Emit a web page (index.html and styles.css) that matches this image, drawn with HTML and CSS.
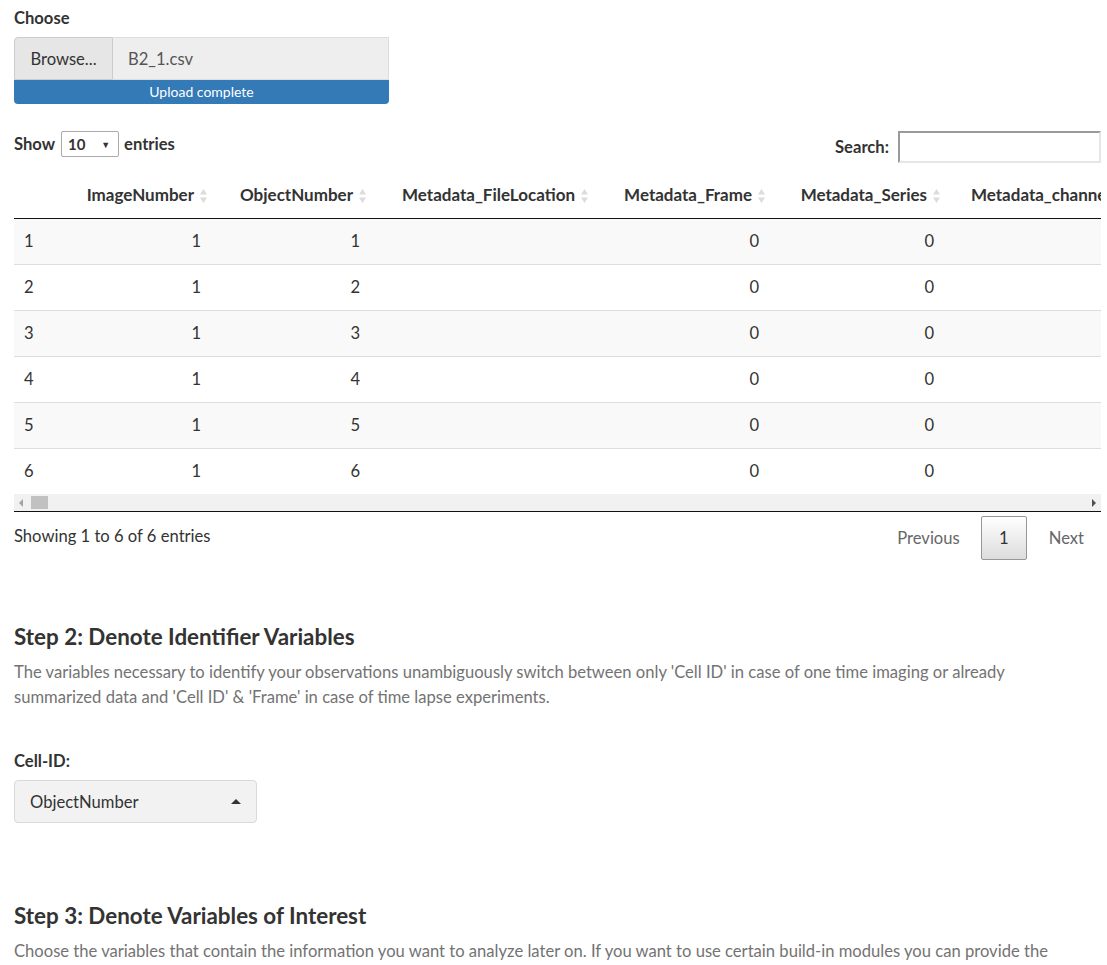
FILE: index.html
```html
<!DOCTYPE html>
<html>
<head>
<meta charset="utf-8">
<link rel="stylesheet" href="styles.css">
</head>
<body>
<div class="page">
  <div class="field">
    <div class="lbl">Choose</div>
    <div class="file-row">
      <span class="browse">Browse...</span>
      <span class="fname">B2_1.csv</span>
    </div>
    <div class="progress">Upload complete</div>
  </div>

  <div class="dt">
    <div class="dt-top">
      <div class="length">Show <span class="sel">10 <span class="arr">▼</span></span> entries</div>
      <div class="search">Search: <span class="inp"></span></div>
    </div>
    <div class="scroll">
      <table class="grid">
        <colgroup>
          <col class="c0"><col class="c1"><col class="c2"><col class="c3"><col class="c4"><col class="c5"><col class="c6">
        </colgroup>
        <thead>
          <tr>
            <th></th>
            <th>ImageNumber<svg class="sort" viewBox="0 0 7 20"><path d="M3.5 3 L7 8.5 L0 8.5Z M0 11.5 L7 11.5 L3.5 17Z"/></svg></th>
            <th>ObjectNumber<svg class="sort" viewBox="0 0 7 20"><path d="M3.5 3 L7 8.5 L0 8.5Z M0 11.5 L7 11.5 L3.5 17Z"/></svg></th>
            <th>Metadata_FileLocation<svg class="sort" viewBox="0 0 7 20"><path d="M3.5 3 L7 8.5 L0 8.5Z M0 11.5 L7 11.5 L3.5 17Z"/></svg></th>
            <th>Metadata_Frame<svg class="sort" viewBox="0 0 7 20"><path d="M3.5 3 L7 8.5 L0 8.5Z M0 11.5 L7 11.5 L3.5 17Z"/></svg></th>
            <th>Metadata_Series<svg class="sort" viewBox="0 0 7 20"><path d="M3.5 3 L7 8.5 L0 8.5Z M0 11.5 L7 11.5 L3.5 17Z"/></svg></th>
            <th class="left">Metadata_channel<svg class="sort" viewBox="0 0 7 20"><path d="M3.5 3 L7 8.5 L0 8.5Z M0 11.5 L7 11.5 L3.5 17Z"/></svg></th>
          </tr>
        </thead>
        <tbody>
          <tr><td class="idx">1</td><td>1</td><td>1</td><td></td><td>0</td><td>0</td><td></td></tr>
          <tr><td class="idx">2</td><td>1</td><td>2</td><td></td><td>0</td><td>0</td><td></td></tr>
          <tr><td class="idx">3</td><td>1</td><td>3</td><td></td><td>0</td><td>0</td><td></td></tr>
          <tr><td class="idx">4</td><td>1</td><td>4</td><td></td><td>0</td><td>0</td><td></td></tr>
          <tr><td class="idx">5</td><td>1</td><td>5</td><td></td><td>0</td><td>0</td><td></td></tr>
          <tr><td class="idx">6</td><td>1</td><td>6</td><td></td><td>0</td><td>0</td><td></td></tr>
        </tbody>
      </table>
    </div>
    <div class="hbar">
      <span class="tri-l"></span>
      <span class="thumb"></span>
      <span class="spacer"></span>
      <span class="tri-r"></span>
    </div>
    <div class="dt-bottom">
      <div class="info">Showing 1 to 6 of 6 entries</div>
      <div class="paginate">
        <span class="pbtn disabled">Previous</span>
        <span class="pbtn current">1</span>
        <span class="pbtn disabled">Next</span>
      </div>
    </div>
  </div>

  <h3 class="step">Step 2: Denote Identifier Variables</h3>
  <p class="desc">The variables necessary to identify your observations unambiguously switch between only 'Cell ID' in case of one time imaging or already<br>summarized data and 'Cell ID' &amp; 'Frame' in case of time lapse experiments.</p>

  <div class="field2">
    <div class="lbl">Cell-ID:</div>
    <div class="selectize"><span>ObjectNumber</span><span class="caret"></span></div>
  </div>

  <h3 class="step step3">Step 3: Denote Variables of Interest</h3>
  <p class="desc">Choose the variables that contain the information you want to analyze later on. If you want to use certain build-in modules you can provide the</p>
</div>
</body>
</html>
```
FILE: styles.css
```css
html, body {
  margin: 0;
  padding: 0;
  background: #fff;
}
body {
  font-family: Lato, "Open Sans", sans-serif;
  font-size: 16.6px;
  color: #333;
  overflow: hidden;
}
.page {
  padding: 0 6px 0 14px;
}
.lbl {
  font-weight: bold;
  line-height: 20px;
}
.field {
  padding-top: 8px;
}
.field .lbl {
  margin-bottom: 9px;
}
.file-row {
  display: flex;
  width: 375px;
  height: 43px;
}
.browse {
  width: 97px;
  border: 1px solid #ccc;
  border-radius: 4px 0 0 0;
  background: #e6e6e6;
  display: flex;
  align-items: center;
  justify-content: center;
  color: #333;
}
.fname {
  flex: 1;
  background: #eee;
  border: 1px solid #ddd;
  border-left: none;
  display: flex;
  align-items: center;
  padding-left: 15px;
  color: #555;
}
.progress {
  width: 375px;
  height: 24px;
  background: #337ab7;
  color: #fff;
  font-size: 14px;
  line-height: 24px;
  text-align: center;
  border-radius: 0 0 4px 4px;
}
.dt {
  margin-top: 27px;
}
.dt-top {
  display: flex;
  justify-content: space-between;
  align-items: flex-start;
  height: 32px;
  margin-bottom: 12px;
  font-weight: bold;
}
.length {
  display: flex;
  align-items: center;
  height: 26px;
  gap: 4px;
}
.sel {
  display: inline-flex;
  align-items: center;
  justify-content: space-between;
  box-sizing: border-box;
  width: 58px;
  height: 26px;
  border: 1px solid #aaa;
  border-radius: 2px;
  padding: 0 8px 0 6px;
  margin: 0 1px 0 2px;
  font-size: 15px;
}
.arr {
  font-size: 9px;
}
.search {
  display: flex;
  align-items: center;
  height: 32px;
  gap: 9px;
}
.inp {
  display: inline-block;
  box-sizing: border-box;
  width: 203px;
  height: 32px;
  border: 2px solid;
  border-color: #9a9a9a #e6e6e6 #e6e6e6 #9a9a9a;
}
.scroll {
  overflow: hidden;
  width: 100%;
}
.grid {
  border-collapse: collapse;
  table-layout: fixed;
  width: 1250px;
}
.c0 { width: 42px; }
.c1 { width: 155px; }
.c2 { width: 159px; }
.c3 { width: 222px; }
.c4 { width: 177px; }
.c5 { width: 175px; }
.c6 { width: 320px; }
.grid th {
  font-weight: bold;
  font-size: 17px;
  text-align: right;
  padding: 8px 4px 12px 10px;
  line-height: 23px;
  border-bottom: 1px solid #111;
  white-space: nowrap;
}
.grid th.left {
  text-align: left;
  padding-left: 27px;
}
.sort {
  width: 7px;
  height: 20px;
  margin-left: 6px;
  vertical-align: -5px;
  fill: #dcdcdc;
}
.grid td {
  padding: 11px 10px;
  line-height: 23px;
  text-align: right;
  border-top: 1px solid #ddd;
}
.grid tbody tr:first-child td {
  border-top: none;
}
.grid tbody tr:nth-child(odd) {
  background: #f9f9f9;
}
.grid td.idx {
  text-align: left;
}
.hbar {
  display: flex;
  align-items: center;
  height: 17px;
  background: #f1f1f1;
  border-bottom: 1px solid #111;
}
.tri-l {
  width: 0;
  height: 0;
  border-top: 4px solid transparent;
  border-bottom: 4px solid transparent;
  border-right: 4px solid #a3a3a3;
  margin-left: 5px;
}
.thumb {
  width: 17px;
  height: 13px;
  background: #c1c1c1;
  margin-left: 8px;
}
.spacer {
  flex: 1;
}
.tri-r {
  width: 0;
  height: 0;
  border-top: 4px solid transparent;
  border-bottom: 4px solid transparent;
  border-left: 4px solid #505050;
  margin-right: 5px;
}
.dt-bottom {
  display: flex;
  justify-content: space-between;
  align-items: flex-start;
}
.info {
  padding-top: 13px;
  line-height: 23px;
}
.paginate {
  display: flex;
  padding-top: 4px;
  margin-right: 0;
}
.pbtn {
  box-sizing: border-box;
  height: 44px;
  padding: 0 16px;
  line-height: 42px;
  border: 1px solid transparent;
  border-radius: 2px;
  margin-left: 2px;
  color: #666;
}
.pbtn.current {
  width: 46px;
  text-align: center;
  padding: 0;
  color: #333;
  border-color: #979797;
  background: linear-gradient(to bottom, #fff 0%, #dcdcdc 100%);
  margin: 0 3px 0 4px;
}
.step {
  font-size: 22.4px;
  font-weight: bold;
  margin: 0;
  line-height: 28px;
}
.dt + .step {
  margin-top: 63px;
}
.desc {
  margin: 9px 0 0 0;
  line-height: 25px;
  color: #737373;
}
.field2 {
  margin-top: 41px;
}
.field2 .lbl {
  margin-bottom: 9px;
}
.selectize {
  box-sizing: border-box;
  width: 243px;
  height: 43px;
  background: #f2f2f2;
  border: 1px solid #d9d9d9;
  border-radius: 4px;
  display: flex;
  align-items: center;
  justify-content: space-between;
  padding: 0 15px 0 15px;
  color: #333;
}
.caret {
  width: 0;
  height: 0;
  border-left: 5px solid transparent;
  border-right: 5px solid transparent;
  border-bottom: 5px solid #333;
  margin-top: -1px;
}
.step3 {
  margin-top: 79px;
}
.step3 + .desc {
  margin-top: 9px;
}
```
